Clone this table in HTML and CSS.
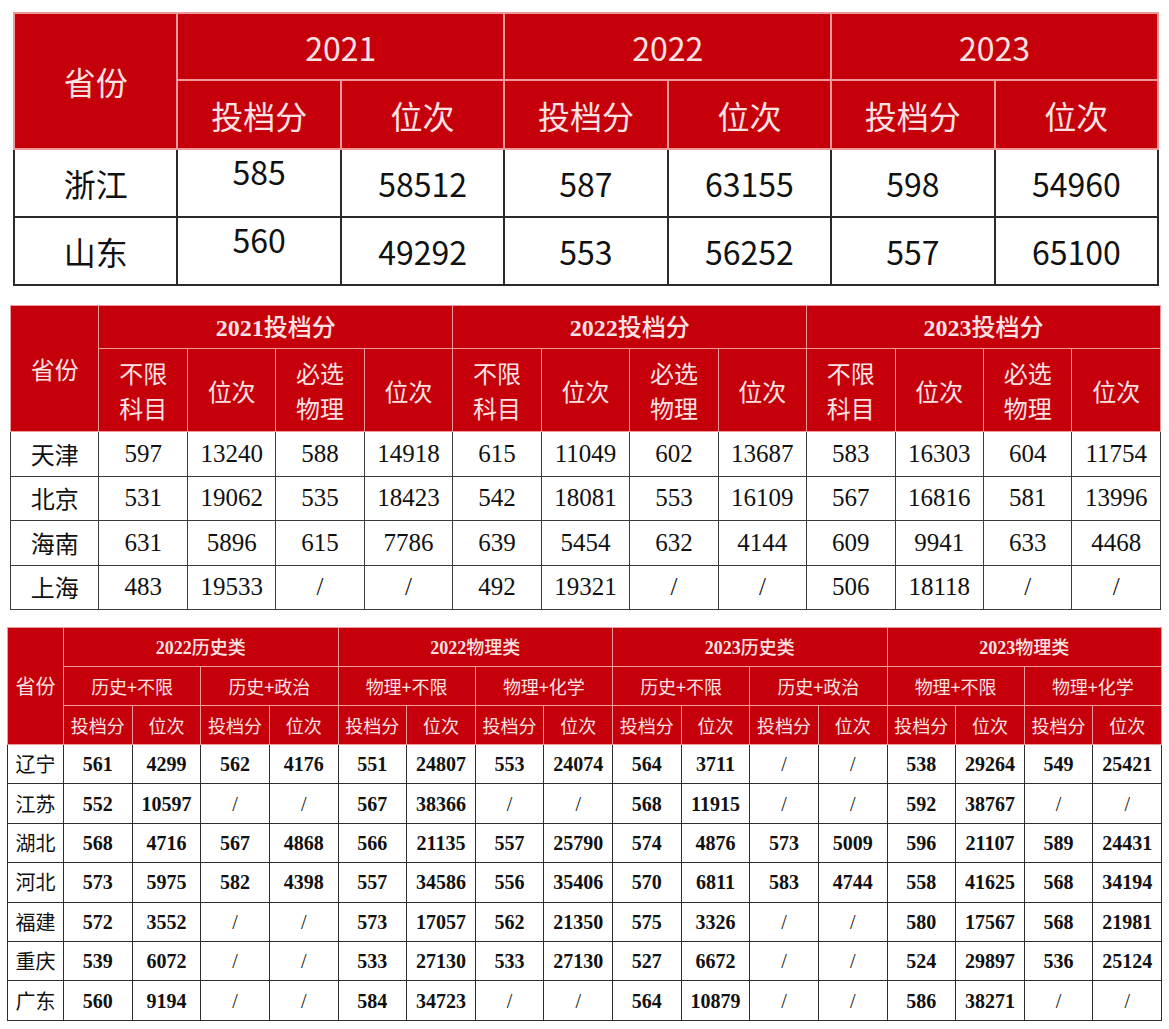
FILE: index.html
```html
<!DOCTYPE html>
<html lang="zh-CN">
<head>
<meta charset="utf-8">
<title>投档分与位次</title>
<link rel="stylesheet" href="styles.css">
</head>
<body>
<div class="page">

<table class="t1">
  <colgroup><col span="7" class="t1-col"></colgroup>
  <tr class="t1-h1">
    <th rowspan="2">省份</th>
    <th colspan="2">2021</th>
    <th colspan="2">2022</th>
    <th colspan="2">2023</th>
  </tr>
  <tr class="t1-h2">
    <th>投档分</th><th>位次</th>
    <th>投档分</th><th>位次</th>
    <th>投档分</th><th>位次</th>
  </tr>
  <tr class="t1-r1">
    <td>浙江</td><td class="raised">585</td><td>58512</td><td>587</td><td>63155</td><td>598</td><td>54960</td>
  </tr>
  <tr class="t1-r2">
    <td>山东</td><td class="raised">560</td><td>49292</td><td>553</td><td>56252</td><td>557</td><td>65100</td>
  </tr>
</table>

<table class="t2">
  <colgroup><col span="13" class="t2-col"></colgroup>
  <tr class="t2-h1">
    <th rowspan="2" class="prov-h">省份</th>
    <th colspan="4" class="yr"><span class="num">2021</span>投档分</th>
    <th colspan="4" class="yr"><span class="num">2022</span>投档分</th>
    <th colspan="4" class="yr"><span class="num">2023</span>投档分</th>
  </tr>
  <tr class="t2-h2">
    <th>不限<br>科目</th><th>位次</th><th>必选<br>物理</th><th>位次</th>
    <th>不限<br>科目</th><th>位次</th><th>必选<br>物理</th><th>位次</th>
    <th>不限<br>科目</th><th>位次</th><th>必选<br>物理</th><th>位次</th>
  </tr>
  <tr class="t2-r">
    <td class="prov">天津</td><td>597</td><td>13240</td><td>588</td><td>14918</td><td>615</td><td>11049</td><td>602</td><td>13687</td><td>583</td><td>16303</td><td>604</td><td>11754</td>
  </tr>
  <tr class="t2-r">
    <td class="prov">北京</td><td>531</td><td>19062</td><td>535</td><td>18423</td><td>542</td><td>18081</td><td>553</td><td>16109</td><td>567</td><td>16816</td><td>581</td><td>13996</td>
  </tr>
  <tr class="t2-r">
    <td class="prov">海南</td><td>631</td><td>5896</td><td>615</td><td>7786</td><td>639</td><td>5454</td><td>632</td><td>4144</td><td>609</td><td>9941</td><td>633</td><td>4468</td>
  </tr>
  <tr class="t2-r">
    <td class="prov">上海</td><td>483</td><td>19533</td><td>/</td><td>/</td><td>492</td><td>19321</td><td>/</td><td>/</td><td>506</td><td>18118</td><td>/</td><td>/</td>
  </tr>
</table>

<table class="t3">
  <colgroup><col class="t3-prov"><col span="16" class="t3-col"></colgroup>
  <tr class="t3-h">
    <th rowspan="3" class="prov-h">省份</th>
    <th colspan="4" class="yr"><span class="num">2022</span>历史类</th>
    <th colspan="4" class="yr"><span class="num">2022</span>物理类</th>
    <th colspan="4" class="yr"><span class="num">2023</span>历史类</th>
    <th colspan="4" class="yr"><span class="num">2023</span>物理类</th>
  </tr>
  <tr class="t3-h">
    <th colspan="2">历史+不限</th><th colspan="2">历史+政治</th>
    <th colspan="2">物理+不限</th><th colspan="2">物理+化学</th>
    <th colspan="2">历史+不限</th><th colspan="2">历史+政治</th>
    <th colspan="2">物理+不限</th><th colspan="2">物理+化学</th>
  </tr>
  <tr class="t3-h">
    <th>投档分</th><th>位次</th><th>投档分</th><th>位次</th>
    <th>投档分</th><th>位次</th><th>投档分</th><th>位次</th>
    <th>投档分</th><th>位次</th><th>投档分</th><th>位次</th>
    <th>投档分</th><th>位次</th><th>投档分</th><th>位次</th>
  </tr>
  <tr class="t3-r">
    <td class="prov">辽宁</td><td>561</td><td>4299</td><td>562</td><td>4176</td><td>551</td><td>24807</td><td>553</td><td>24074</td><td>564</td><td>3711</td><td class="sl">/</td><td class="sl">/</td><td>538</td><td>29264</td><td>549</td><td>25421</td>
  </tr>
  <tr class="t3-r">
    <td class="prov">江苏</td><td>552</td><td>10597</td><td class="sl">/</td><td class="sl">/</td><td>567</td><td>38366</td><td class="sl">/</td><td class="sl">/</td><td>568</td><td>11915</td><td class="sl">/</td><td class="sl">/</td><td>592</td><td>38767</td><td class="sl">/</td><td class="sl">/</td>
  </tr>
  <tr class="t3-r">
    <td class="prov">湖北</td><td>568</td><td>4716</td><td>567</td><td>4868</td><td>566</td><td>21135</td><td>557</td><td>25790</td><td>574</td><td>4876</td><td>573</td><td>5009</td><td>596</td><td>21107</td><td>589</td><td>24431</td>
  </tr>
  <tr class="t3-r">
    <td class="prov">河北</td><td>573</td><td>5975</td><td>582</td><td>4398</td><td>557</td><td>34586</td><td>556</td><td>35406</td><td>570</td><td>6811</td><td>583</td><td>4744</td><td>558</td><td>41625</td><td>568</td><td>34194</td>
  </tr>
  <tr class="t3-r">
    <td class="prov">福建</td><td>572</td><td>3552</td><td class="sl">/</td><td class="sl">/</td><td>573</td><td>17057</td><td>562</td><td>21350</td><td>575</td><td>3326</td><td class="sl">/</td><td class="sl">/</td><td>580</td><td>17567</td><td>568</td><td>21981</td>
  </tr>
  <tr class="t3-r">
    <td class="prov">重庆</td><td>539</td><td>6072</td><td class="sl">/</td><td class="sl">/</td><td>533</td><td>27130</td><td>533</td><td>27130</td><td>527</td><td>6672</td><td class="sl">/</td><td class="sl">/</td><td>524</td><td>29897</td><td>536</td><td>25124</td>
  </tr>
  <tr class="t3-r">
    <td class="prov">广东</td><td>560</td><td>9194</td><td class="sl">/</td><td class="sl">/</td><td>584</td><td>34723</td><td class="sl">/</td><td class="sl">/</td><td>564</td><td>10879</td><td class="sl">/</td><td class="sl">/</td><td>586</td><td>38271</td><td class="sl">/</td><td class="sl">/</td>
  </tr>
</table>

</div>
</body>
</html>
```

FILE: styles.css
```css
html, body {
  margin: 0;
  padding: 0;
  background: #ffffff;
}

.page {
  width: 1169px;
  padding-top: 12px;
  display: flex;
  flex-direction: column;
}

table {
  border-collapse: collapse;
  table-layout: fixed;
  text-align: center;
}

th, td {
  padding: 0;
  text-align: center;
  vertical-align: middle;
  white-space: nowrap;
}

th {
  background: #c5000b;
  color: #fce2e2;
  font-weight: normal;
}

td {
  background: #ffffff;
  color: #111111;
}

/* ---------- Table 1 ---------- */
.t1 {
  margin-left: 13px;
  width: 1144px;
  font-family: "Noto Sans CJK SC", "Noto Sans", sans-serif;
  font-size: 32px;
  line-height: 38px;
}

.t1-col { width: 163.43px; }

.t1 th {
  border: 2px solid #ef9a9a;
}

.t1 td {
  border: 2px solid #2a2a2a;
}

.t1-h1 { height: 67px; }
.t1-h2 { height: 69px; }
.t1-r1 { height: 68px; }
.t1-r2 { height: 68px; }

.t1 td.raised {
  padding-bottom: 24px;
}

/* ---------- Table 2 ---------- */
.t2 {
  margin-top: 19px;
  margin-left: 10px;
  width: 1150px;
  font-family: "Liberation Serif", "Noto Sans CJK SC", serif;
  font-size: 25px;
  line-height: 30px;
}

.t2-col { width: 88.46px; }

.t2 th {
  border: 1px solid #ec9c9c;
  font-family: "Noto Sans CJK SC", "Noto Sans", sans-serif;
  font-size: 24px;
  line-height: 35px;
}

.t2 th.yr {
  font-weight: 500;
}

.t2 th.yr .num,
.t3 th.yr .num {
  font-family: "Liberation Serif", serif;
  font-weight: bold;
}

.t2 td {
  border: 1px solid #3a3a3a;
}

.t2 td.prov {
  font-family: "Noto Sans CJK SC", sans-serif;
  font-size: 24px;
}

.t2-h1 { height: 43px; }
.t2-h2 { height: 83px; }
.t2-r { height: 44.5px; }

/* ---------- Table 3 ---------- */
.t3 {
  margin-top: 17px;
  margin-left: 7px;
  width: 1154px;
  font-family: "Liberation Serif", "Noto Sans CJK SC", serif;
  font-size: 20px;
  line-height: 26px;
  font-weight: bold;
}

.t3-prov { width: 56px; }
.t3-col { width: 68.625px; }

.t3 th {
  border: 1px solid #ec9c9c;
  font-family: "Noto Sans CJK SC", "Noto Sans", sans-serif;
  font-size: 18px;
  font-weight: normal;
}

.t3 th.yr {
  font-weight: 500;
}

.t3 th.prov-h {
  font-size: 20px;
}

.t3 td {
  border: 1px solid #2e2e2e;
}

.t3 td.prov {
  font-family: "Noto Sans CJK SC", sans-serif;
  font-weight: normal;
  font-size: 20px;
}

.t3 td.sl {
  font-weight: normal;
}

.t3-h { height: 39px; }
.t3-r { height: 39.4px; }
```
